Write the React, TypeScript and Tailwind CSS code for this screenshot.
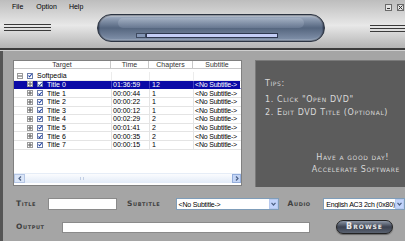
import {Fragment} from 'react'

const titles = [
  {name: 'Title 0', time: '01:36:59', chapters: '12'},
  {name: 'Title 1', time: '00:00:44', chapters: '1'},
  {name: 'Title 2', time: '00:00:22', chapters: '1'},
  {name: 'Title 3', time: '00:00:12', chapters: '1'},
  {name: 'Title 4', time: '00:02:29', chapters: '2'},
  {name: 'Title 5', time: '00:01:41', chapters: '2'},
  {name: 'Title 6', time: '00:00:35', chapters: '2'},
  {name: 'Title 7', time: '00:00:15', chapters: '1'}
]

const font = "font-['Liberation_Sans',Arial,sans-serif]"
const caps = "font-['DejaVu_Sans',sans-serif] [font-variant:small-caps] tracking-[0.6px]"

function Stripes({className}: {className: string}) {
  return (
    <div className={`flex flex-col gap-[2px] ${className}`}>
      <div className="h-[1px] bg-[#3a3a3a]" />
      <div className="h-[1px] bg-[#3a3a3a]" />
      <div className="h-[1px] bg-[#3a3a3a]" />
    </div>
  )
}

function ExpandBox({open}: {open?: boolean}) {
  return (
    <div className="w-[6px] h-[6px] border border-[#9a9a9a] bg-white flex items-center justify-center">
      <svg width="4" height="4" viewBox="0 0 4 4">
        <path d="M0 2H4" stroke="#555" strokeWidth="1" />
        {!open && <path d="M2 0V4" stroke="#555" strokeWidth="1" />}
      </svg>
    </div>
  )
}

function Check() {
  return (
    <div className="w-[6px] h-[6px] border border-[#6b7da8] bg-white flex items-center justify-center">
      <svg width="5" height="5" viewBox="0 0 5 5">
        <path d="M0.5 2.5L2 4L4.7 0.6" stroke="#1c3fa8" strokeWidth="1.3" fill="none" />
      </svg>
    </div>
  )
}

function SelectBox({text, className}: {text: string; className: string}) {
  return (
    <div className={`h-[12px] bg-white border border-[#7f9db9] flex items-center ${className}`}>
      <span
        className={`flex-1 pl-[2px] text-[7px] font-normal leading-none text-black whitespace-nowrap overflow-hidden [font-variant:normal] tracking-[-0.2px] ${font}`}>
        {text}
      </span>
      <div className="w-[9px] h-[10px] bg-[#c1d3fb] border border-[#b7c9ee] flex items-center justify-center">
        <svg width="5" height="4" viewBox="0 0 5 4">
          <path d="M0.5 0.8L2.5 3L4.5 0.8" stroke="#4d6185" strokeWidth="1.2" fill="none" />
        </svg>
      </div>
    </div>
  )
}

export default function App() {
  return (
    <div className="w-[405px] h-[241px] bg-[#a5a5a5] overflow-hidden flex flex-col">
      {/* skin header */}
      <div className="h-[51px] flex flex-col bg-gradient-to-b from-[#bdbdbd] via-[#e8e8e8] to-[#adadad]">
        <div className={`h-[14px] flex items-center text-[7px] text-black ${font}`}>
          <span className="ml-[12px]">File</span>
          <span className="ml-[13px]">Option</span>
          <span className="ml-[12px]">Help</span>
          <div className="ml-auto mr-[1px] flex gap-[5px]">
            <div className="w-[7px] h-[7px] bg-[#e4e4e4] border border-[#6a6a6a] flex items-end justify-center pb-[1px]">
              <div className="w-[3px] h-[1px] bg-[#333]" />
            </div>
            <div className="w-[7px] h-[7px] bg-[#e4e4e4] border border-[#6a6a6a] flex items-center justify-center">
              <svg width="5" height="5" viewBox="0 0 5 5">
                <path d="M0.5 0.5L4.5 4.5M4.5 0.5L0.5 4.5" stroke="#333" strokeWidth="1" />
              </svg>
            </div>
          </div>
        </div>
        <div className="h-[28px] flex items-center">
          <Stripes className="ml-[4px] w-[47px] -mt-[2px]" />
          <div className="ml-[46px] w-[228px] h-[28px] rounded-full border border-[#2c3442] bg-gradient-to-b from-[#c7cfdc] via-[#4a5a76] to-[#a3b2c8] p-[2px] shadow-[inset_0_0_2px_#000]">
            <div className="h-full rounded-full bg-gradient-to-b from-[#9aa8bd] via-[#55667f] to-[#7d8da6] flex flex-col">
              <div className="h-[10px] mx-[18px] mt-[1px] rounded-full bg-gradient-to-b from-[#aab6c8] to-[#6f7f98] opacity-70" />
              <div className="mt-[5px] ml-[36px] flex">
                <div className="w-[10px] h-[5px] bg-[#8496b6] border border-[#3e4a60]" />
                <div className="w-[132px] h-[5px] bg-[#c3cdf6] border border-[#2e3850]" />
              </div>
            </div>
          </div>
          <Stripes className="ml-[45px] flex-1" />
        </div>
        <div className="mt-auto h-[2px] bg-[#3c3c3c]" />
        <div className="h-[1px] bg-[#d0d0d0]" />
      </div>

      {/* body */}
      <div className="flex-1 flex flex-col border-l-[3px] border-[#555]">
        <div className="mt-[9px] flex">
          <div className={`ml-[10px] w-[229px] h-[126px] bg-white border border-[#808080] flex flex-col text-[7px] leading-none text-black ${font}`}>
            <div className="grid grid-cols-[97px_38px_44px_1fr] h-[8px] border-b border-[#c8c8c8] text-[#333]">
              <div className="flex items-center justify-center border-r border-[#c8c8c8]">Target</div>
              <div className="flex items-center justify-center border-r border-[#c8c8c8]">Time</div>
              <div className="flex items-center justify-center border-r border-[#c8c8c8]">Chapters</div>
              <div className="flex items-center justify-center">Subtitle</div>
            </div>
            <div className="h-[3px]" />
            <div className="grid grid-cols-[97px_38px_44px_1fr] auto-rows-[8.64px]">
              <div className="flex items-center gap-[4px] pl-[3px] border-b border-[#ececec]">
                <ExpandBox open />
                <Check />
                <span>Softpedia</span>
              </div>
              <div className="border-b border-l border-[#ececec]" />
              <div className="border-b border-l border-[#ececec]" />
              <div className="border-b border-l border-[#ececec]" />
              {titles.map((t, i) => {
                const sel = i === 0
                const cell = sel
                  ? 'bg-[#0a0aa6] text-white border-[#0a0aa6]'
                  : 'border-[#e4e4e4]'
                return (
                  <Fragment key={t.name}>
                    <div className={`flex items-center gap-[4px] pl-[13px] border-b ${cell}`}>
                      <ExpandBox />
                      <Check />
                      <span>{t.name}</span>
                    </div>
                    <div className={`flex items-center pl-[1px] border-b border-l ${cell} ${sel ? 'border-l-[#4040c0]' : ''}`}>
                      {t.time}
                    </div>
                    <div className={`flex items-center pl-[2px] border-b border-l ${cell} ${sel ? 'border-l-[#4040c0]' : ''}`}>
                      {t.chapters}
                    </div>
                    <div className={`flex items-center pl-[1px] tracking-[-0.2px] border-b border-l ${cell} ${sel ? 'border-l-[#4040c0] border-r border-r-[#ffffff]' : ''}`}>
                      &lt;No Subtitle-&gt;
                    </div>
                  </Fragment>
                )
              })}
            </div>
            <div className="mt-auto h-[10px] mb-[2px] flex bg-gradient-to-b from-[#fbfcfe] to-[#e2ebf8] border-t border-[#e6edf7]">
              <div className="w-[11px] h-full bg-[#dbe6f8] border border-[#b5c6e4] flex items-center justify-center">
                <svg width="4" height="5" viewBox="0 0 4 5">
                  <path d="M3 0.5L1 2.5L3 4.5" stroke="#4d6185" strokeWidth="1.2" fill="none" />
                </svg>
              </div>
              <div className="flex-1 flex items-center">
                <div className="ml-[55px] w-[4px] h-[3px] border-x border-[#c3cfe4]" />
              </div>
              <div className="w-[9px] h-full bg-[#c5d6f6] border border-[#94aedc] flex items-center justify-center">
                <svg width="4" height="5" viewBox="0 0 4 5">
                  <path d="M1 0.5L3 2.5L1 4.5" stroke="#4d6185" strokeWidth="1.2" fill="none" />
                </svg>
              </div>
            </div>
          </div>

          <div className={`ml-[13px] flex-1 h-[127px] bg-[#5c5c5c] border-l border-t border-[#7a7a7a] flex flex-col text-[#d9d9d9] text-[8px] leading-none ${caps}`}>
            <div className="mt-[19px] ml-[9px]">Tips:</div>
            <div className="mt-[8px] ml-[9px]">1. Click "Open DVD"</div>
            <div className="mt-[5px] ml-[9px]">2. Edit DVD Title (Optional)</div>
            <div className="mt-[37px] mr-[16px] text-right">Have a good day!</div>
            <div className="mt-[4px] mr-[5px] text-right">Accelerate Software</div>
          </div>
        </div>

        <div className={`mt-[11px] flex items-center h-[12px] text-[#404040] text-[7.5px] font-semibold leading-none ${caps}`}>
          <span className="ml-[13px] w-[32px]">Title</span>
          <div className="w-[70px] h-[12px] bg-white border border-[#8a8a8a]" />
          <span className="ml-[10px] w-[49px]">Subtitle</span>
          <SelectBox text="<No Subtitle->" className="w-[104px]" />
          <span className="ml-[9px] w-[36px]">Audio</span>
          <SelectBox text="English AC3 2ch (0x80)" className="flex-1" />
        </div>

        <div className={`mt-[11px] flex items-center h-[12px] text-[#404040] text-[7.5px] font-semibold leading-none ${caps}`}>
          <span className="ml-[13px] w-[46px]">Output</span>
          <div className="w-[248px] h-[11px] bg-white border border-[#8a8a8a]" />
          <div className="ml-[26px] w-[57px] h-[14px] rounded-full border border-[#222] bg-gradient-to-b from-[#8e98a8] via-[#3c4250] to-[#5a6270] flex items-center justify-center text-[#e8e8e8] text-[8px] tracking-[1px] shadow-[0_1px_1px_#666]">
            Browse
          </div>
        </div>
      </div>
    </div>
  )
}
